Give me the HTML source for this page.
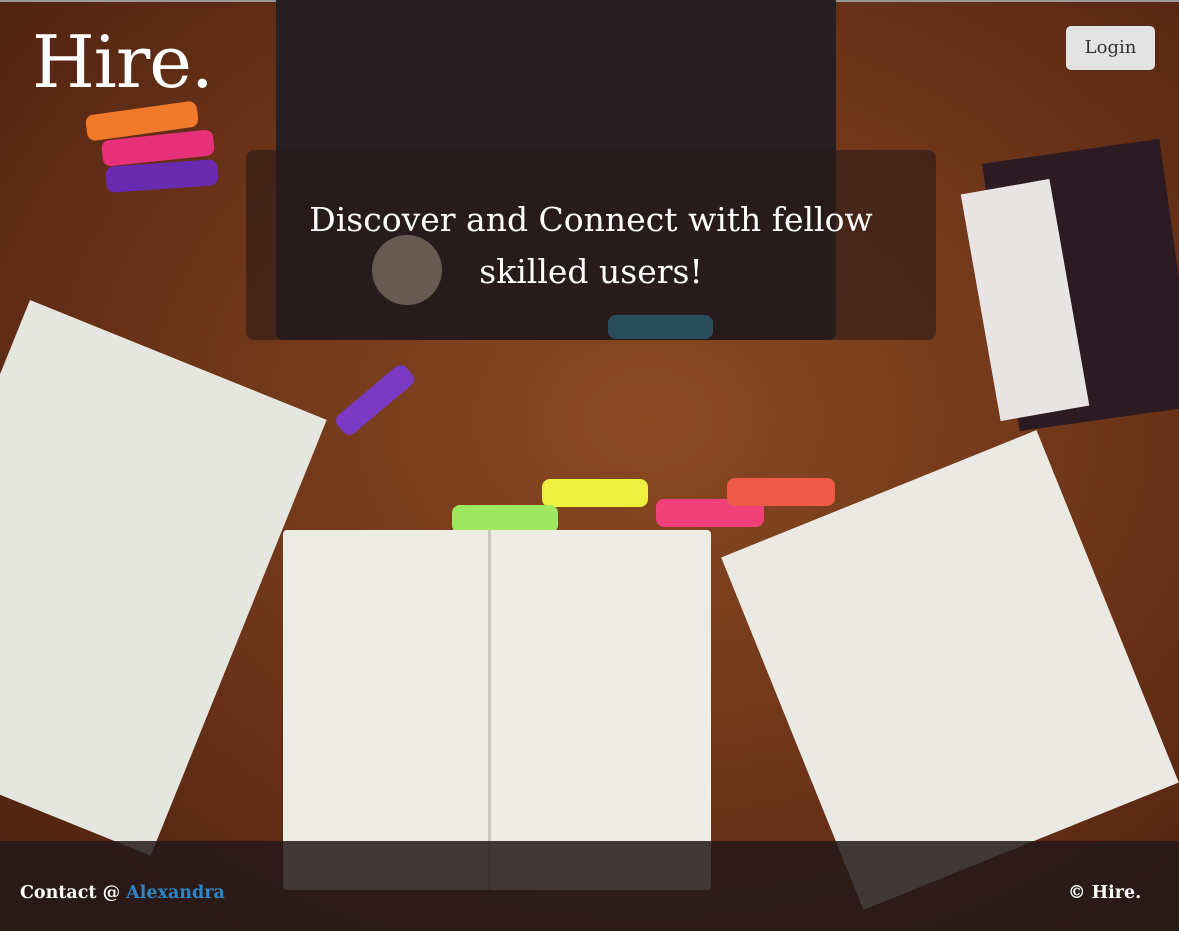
<!DOCTYPE html>
<html style="overflow:hidden;width:1179px;height:931px"><head><style>
body{margin:0;width:1179px;height:931px;overflow:hidden;position:relative;font-family:"DejaVu Serif","Liberation Serif",serif;background:#6e3519;}
.a{position:absolute}
</style></head><body>
<div class="a" style="left:0;top:0;width:1179px;height:931px;background:radial-gradient(ellipse at 55% 45%,#8a4a22 0%,#6b3318 55%,#4a2010 100%)"></div>
<div class="a" style="left:0;top:0;width:1179px;height:2px;background:#999"></div>
<div class="a" style="left:276px;top:0;width:560px;height:340px;background:#262022;border-radius:0 0 8px 8px"></div>
<div class="a" style="left:372px;top:235px;width:70px;height:70px;border-radius:50%;background:#c9b9a6"></div>
<div class="a" style="left:86px;top:108px;width:112px;height:26px;background:#f07a2a;border-radius:8px;transform:rotate(-8deg)"></div>
<div class="a" style="left:102px;top:135px;width:112px;height:26px;background:#e6307a;border-radius:8px;transform:rotate(-6deg)"></div>
<div class="a" style="left:106px;top:163px;width:112px;height:26px;background:#6a2ab0;border-radius:8px;transform:rotate(-4deg)"></div>
<div class="a" style="left:608px;top:315px;width:105px;height:24px;background:#2a9ec4;border-radius:8px"></div>
<div class="a" style="left:330px;top:388px;width:90px;height:24px;background:#7a3ac4;border-radius:8px;transform:rotate(-40deg)"></div>
<div class="a" style="left:542px;top:479px;width:106px;height:28px;background:#eef040;border-radius:8px"></div>
<div class="a" style="left:452px;top:505px;width:106px;height:28px;background:#9ee860;border-radius:8px"></div>
<div class="a" style="left:656px;top:499px;width:108px;height:28px;background:#f2407a;border-radius:8px"></div>
<div class="a" style="left:727px;top:478px;width:108px;height:28px;background:#ee5a48;border-radius:8px"></div>
<div class="a" style="left:1000px;top:150px;width:179px;height:270px;background:#2c1b22;transform:rotate(-8deg)"></div>
<div class="a" style="left:980px;top:185px;width:90px;height:230px;background:#e8e4e4;transform:rotate(-10deg)"></div>
<div class="a" style="width:320px;height:470px;background:#e6e6e0;transform:rotate(22deg);transform-origin:0 0;left:30px;top:300px"></div>
<div class="a" style="left:283px;top:530px;width:428px;height:360px;background:#ecebe4;border-radius:4px"></div>
<div class="a" style="left:488px;top:530px;width:3px;height:360px;background:#c9c6bb"></div>
<div class="a" style="width:340px;height:380px;background:#ebe9e4;transform:rotate(-22deg);left:780px;top:480px"></div>
<div class="a" style="left:246px;top:150px;width:690px;height:190px;background:rgba(40,25,25,0.6);border-radius:8px"></div>
<div class="a" style="left:246px;top:194px;width:690px;text-align:center;color:#fff;font-size:33px;line-height:52px">Discover and Connect with fellow<br>skilled users!</div>
<div class="a" style="left:32px;top:20px;color:#fff;font-size:72px;line-height:84px;letter-spacing:-1px">Hire.</div>
<div class="a" style="left:1066px;top:26px;width:89px;height:44px;background:#e4e3e3;border-radius:5px;color:#333;font-size:18px;line-height:44px;text-align:center">Login</div>
<div class="a" style="left:0;top:841px;width:1179px;height:90px;background:rgba(35,25,25,0.85)"></div>
<div class="a" style="left:20px;top:883px;color:#fff;font-size:17.5px;font-weight:bold">Contact @ <span style="color:#2e86c8">Alexandra</span></div>
<div class="a" style="left:1068px;top:883px;color:#fff;font-size:17.5px;font-weight:bold">© Hire.</div>
</body></html>
